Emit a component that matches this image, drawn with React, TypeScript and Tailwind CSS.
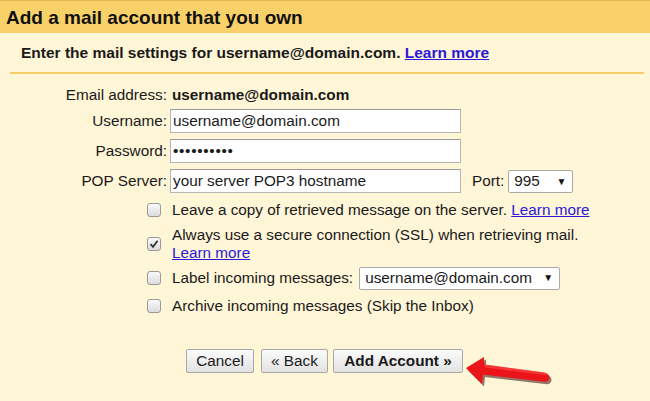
import React from 'react';

const FONT = "font-['Liberation_Sans',Arial,Helvetica,sans-serif]";

const Check: React.FC<{ checked?: boolean }> = ({ checked }) => (
  <div className="w-[14px] h-[14px] shrink-0 rounded-[3px] border border-[#9a9a9a] bg-gradient-to-b from-[#fafafa] to-[#dcdcdc] flex items-center justify-center">
    {checked && (
      <svg width="10" height="10" viewBox="0 0 10 10">
        <path d="M1.5 5.2 L4 7.8 L8.6 1.8" fill="none" stroke="#333" strokeWidth="1.8" />
      </svg>
    )}
  </div>
);

const FakeSelect: React.FC<{ value: string; width: string }> = ({ value, width }) => (
  <div className={`${width} h-[23px] bg-white border border-[#a9a9a9] rounded-[2px] flex items-center justify-between pl-[5px] pr-[6px] text-[15.3px] text-[#1a1a1a]`}>
    <span>{value}</span>
    <span className="text-[10px] text-[#111]">▼</span>
  </div>
);

const Field: React.FC<{ label: string; children: React.ReactNode; className?: string }> = ({ label, children, className }) => (
  <div className={`flex items-center ${className ?? ''}`}>
    <div className="w-[167px] text-right text-[15.3px] text-[#1a1a1a]">{label}</div>
    {children}
  </div>
);

const inputCls =
  'w-[291px] h-[24px] ml-[3px] bg-white border border-[#b5b5b5] border-t-[#9a9a9a] px-[2px] text-[15.3px] text-[#1a1a1a] outline-none';

const Btn: React.FC<{ children: React.ReactNode; className?: string; bold?: boolean }> = ({ children, className, bold }) => (
  <button
    className={`h-[24px] rounded-[2px] border border-[#a8a8a8] bg-gradient-to-b from-[#fbfbfb] to-[#e2e2e2] text-[15.3px] text-[#1a1a1a] ${bold ? 'font-bold' : ''} ${className ?? ''}`}
  >
    {children}
  </button>
);

const App: React.FC = () => {
  return (
    <div className={`w-[650px] h-[401px] overflow-hidden bg-[#fff5d7] ${FONT} text-[#1a1a1a]`}>
      {/* Title bar */}
      <div className="h-[33px] bg-[#f9d169] border-t border-[#e2b64c] flex items-center pl-[6px]">
        <h1 className="text-[19px] font-bold text-[#111] leading-none">Add a mail account that you own</h1>
      </div>

      {/* Intro */}
      <div className="pt-[11px] pl-[21px] text-[15.5px] font-bold leading-[18px] text-[#1a1a1a]">
        Enter the mail settings for username@domain.com.{' '}
        <a href="#" className="text-[#2a1ad8] underline">Learn more</a>
      </div>
      <div className="mt-[10px] ml-[10px] w-[634px] h-[2px] bg-[#f7cd66]" />

      {/* Form */}
      <div className="mt-[10px]">
        <Field label="Email address:" className="h-[22px]">
          <div className="ml-[5px] text-[15.3px] font-bold">username@domain.com</div>
        </Field>
        <Field label="Username:" className="mt-[3px]">
          <input readOnly className={inputCls} value="username@domain.com" />
        </Field>
        <Field label="Password:" className="mt-[6px]">
          <input readOnly type="password" className={`${inputCls} tracking-[0.7px]`} value="abcdefghij" />
        </Field>
        <Field label="POP Server:" className="mt-[6px]">
          <input readOnly className={inputCls} value="your server POP3 hostname" />
          <span className="ml-[11px] text-[15.3px]">Port:</span>
          <div className="ml-[4px]">
            <FakeSelect value="995" width="w-[65px]" />
          </div>
        </Field>

        <div className="mt-[4px] pl-[147px] text-[15.3px] leading-[18px]">
          <div className="h-[26px] flex items-center">
            <Check />
            <span className="ml-[11px]">
              Leave a copy of retrieved message on the server.{' '}
              <a href="#" className="text-[#2a1ad8] underline">Learn more</a>
            </span>
          </div>
          <div className="mt-[3px] flex items-center">
            <Check checked />
            <div className="ml-[11px]">
              <div>Always use a secure connection (SSL) when retrieving mail.</div>
              <a href="#" className="text-[#2a1ad8] underline">Learn more</a>
            </div>
          </div>
          <div className="mt-[4px] h-[24px] flex items-center">
            <Check />
            <span className="ml-[11px]">Label incoming messages:</span>
            <div className="ml-[6px]">
              <FakeSelect value="username@domain.com" width="w-[201px]" />
            </div>
          </div>
          <div className="mt-[4px] h-[24px] flex items-center">
            <Check />
            <span className="ml-[11px]">Archive incoming messages (Skip the Inbox)</span>
          </div>
        </div>

        {/* Buttons */}
        <div className="mt-[31px] pl-[186px] flex items-start">
          <Btn className="w-[68px]">Cancel</Btn>
          <Btn className="w-[67px] ml-[7px]">« Back</Btn>
          <Btn bold className="w-[130px] ml-[5px]">Add Account »</Btn>
          <svg className="ml-[2px] mt-[5px]" width="90" height="34" viewBox="0 0 90 34">
            <path
              d="M1 14 L19 3 L19 10.5 L79 18.5 Q85 20 84.5 24 Q83.5 28.5 78 27.5 L18 20.5 L17 30 Z"
              fill="#3a0a0a"
              opacity="0.55"
              transform="translate(2 2.5)"
            />
            <path
              d="M1 14 L19 3 L19 10.5 L79 18.5 Q85 20 84.5 24 Q83.5 28.5 78 27.5 L18 20.5 L17 30 Z"
              fill="#ea1419"
            />
            <path d="M19 10.5 L79 18.5 Q83 19.5 83.5 21.5 L20 13.5 Z" fill="#ff4a4a" opacity="0.6" />
          </svg>
        </div>
      </div>
    </div>
  );
};

export default App;
